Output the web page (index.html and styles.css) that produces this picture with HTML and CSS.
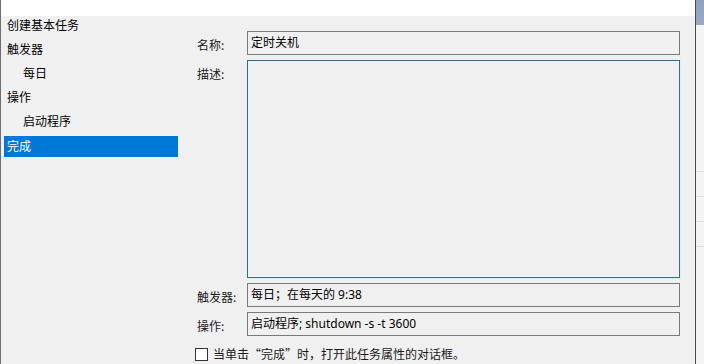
FILE: index.html
```html
<!DOCTYPE html>
<html>

<head>
	<title>创建基本任务向导</title>

	<link rel="stylesheet" href="styles.css">
</head>

<body>

	<div class="dialog">
		<div class="banner"></div>

		<div class="content">
			<ul class="steps">
				<li class="step">创建基本任务</li>
				<li class="step">触发器</li>
				<li class="step sub">每日</li>
				<li class="step">操作</li>
				<li class="step sub">启动程序</li>
				<li class="step active">完成</li>
			</ul>

			<form class="summary">
				<div class="field">
					<label class="label">名称:</label>
					<div class="box">定时关机</div>
				</div>
				<div class="field">
					<label class="label">描述:</label>
					<div class="box desc"></div>
				</div>
				<div class="field">
					<label class="label">触发器:</label>
					<div class="box">每日；在每天的 9:38</div>
				</div>
				<div class="field">
					<label class="label">操作:</label>
					<div class="box">启动程序; shutdown -s -t 3600</div>
				</div>
				<div class="check">
					<span class="checkbox"></span>
					<span class="check_text">当单击“完成”时，打开此任务属性的对话框。</span>
				</div>
			</form>
		</div>
	</div>

	<div class="behind">
		<div class="behind_title"></div>
		<div class="behind_rows">
			<div class="behind_row"></div>
			<div class="behind_row"></div>
			<div class="behind_row"></div>
			<div class="behind_row"></div>
		</div>
	</div>

</body>

</html>
```

FILE: styles.css
```css
html {
	overflow: hidden;
}

body {
	margin: 0px;
	background: #f0f0f0;
	font-family: "Segoe UI", "Noto Sans", "Noto Sans CJK SC", sans-serif;
	font-size: 12px;
	color: #000;
	display: flex;
	height: 364px;
	overflow: hidden;
}

.dialog {
	width: 694px;
	height: 364px;
	overflow: hidden;
	border-left: 1px solid #6e6e6e;
	border-right: 1px solid #4a4a4a;
	background: #f0f0f0;
	display: flex;
	flex-direction: column;
}

.banner {
	height: 16px;
	flex-shrink: 0;
	background: #fff;
}

.content {
	display: flex;
	flex: 1;
	min-height: 0;
}

.steps {
	list-style: none;
	margin: 0;
	padding: 0;
	width: 177px;
}

.step {
	height: 18px;
	line-height: 18px;
	margin: 0 0 6px 3px;
	padding-left: 3px;
	white-space: nowrap;
	font-family: "Noto Sans CJK SC", sans-serif;
}

.step.sub {
	padding-left: 19px;
}

.step.active {
	background: #0078d7;
	color: #fff;
	height: 21px;
	line-height: 20px;
}

.summary {
	padding: 15px 0 0 19px;
}

.field {
	display: flex;
	margin-bottom: 5px;
}

.label {
	width: 50px;
	padding-top: 5px;
	line-height: 18px;
	font-family: "Noto Sans CJK SC", sans-serif;
	color: #1a1a1a;
}

.box {
	box-sizing: border-box;
	width: 433px;
	height: 24px;
	line-height: 21px;
	padding-left: 3px;
	border: 1px solid #7a7a7a;
	background: #f0f0f0;
	white-space: nowrap;
}

.box.desc {
	height: 218px;
	border-color: #3f6a80;
	box-shadow: 0 0 0 1px #dcf0f8, inset 0 0 0 1px #e6f3f9;
}

.check {
	display: flex;
	align-items: flex-start;
	gap: 5px;
	height: 11px;
	margin: 12px 0 0 -2px;
	font-family: "Noto Sans CJK SC", sans-serif;
	color: #1a1a1a;
}

.checkbox {
	width: 11px;
	height: 11px;
	border: 1px solid #333;
	background: #fff;
}

.check_text {
	line-height: 11px;
}

.behind {
	flex: 1;
	display: flex;
	flex-direction: column;
}

.behind_title {
	height: 25px;
	background: linear-gradient(#8ea1bc, #9aaac2);
}

.behind_rows {
	flex: 1;
	background: #f4f4f4;
	padding-top: 146px;
}

.behind_row {
	height: 25px;
	border-top: 1px solid #dcdcdc;
	box-sizing: border-box;
}
```
